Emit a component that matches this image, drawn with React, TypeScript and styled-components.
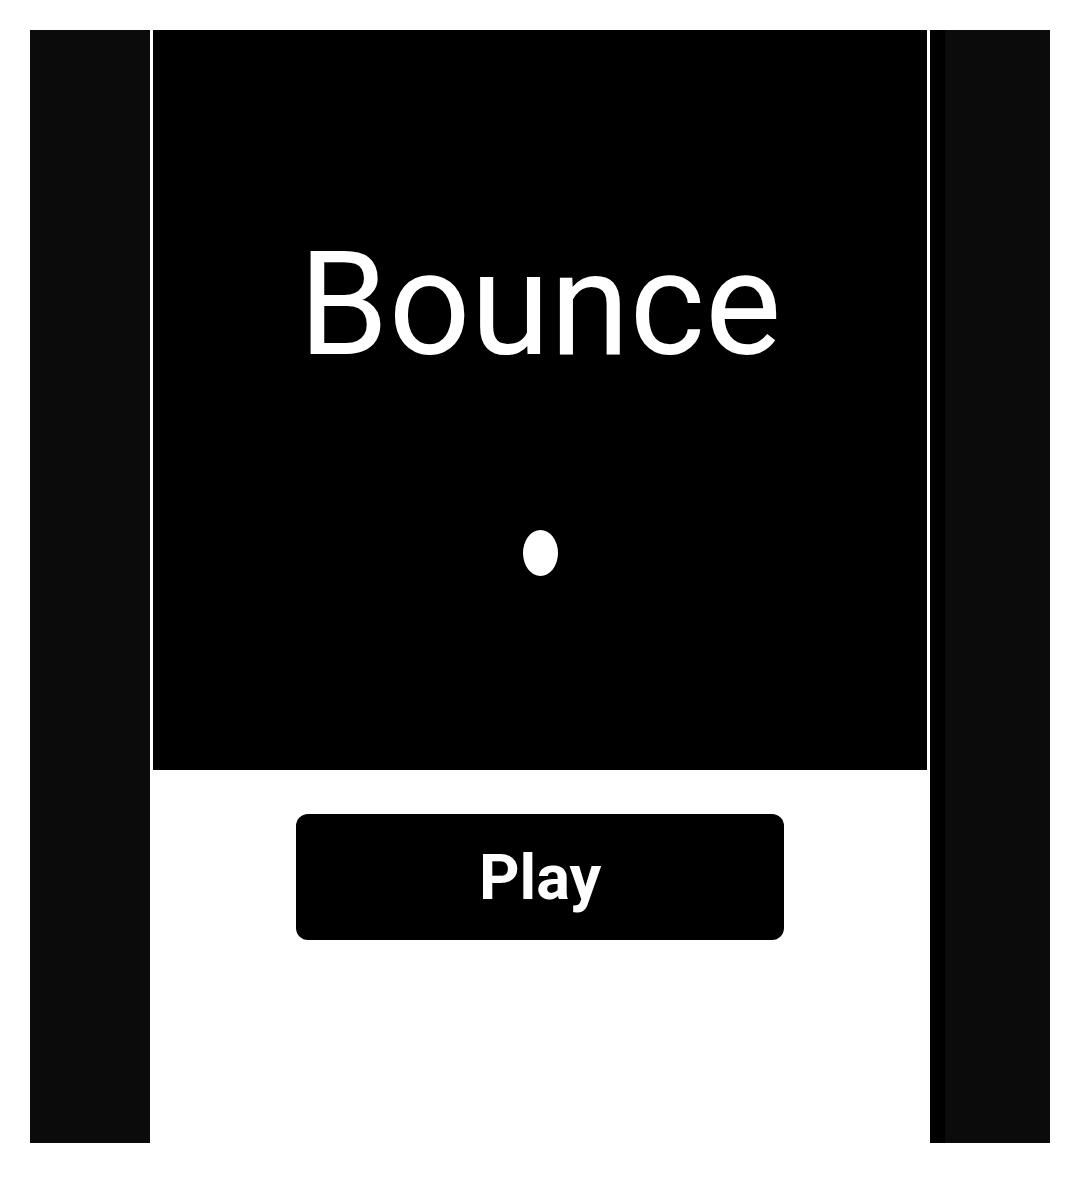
import styled, { createGlobalStyle } from "styled-components";

const GlobalStyle = createGlobalStyle`
  html, body {
    margin: 0;
    padding: 0;
    background: #ffffff;
    font-family: Roboto, sans-serif;
  }
`;

const Page = styled.div`
  display: grid;
  grid-template-columns: 120px 774px 120px;
  column-gap: 3px;
  padding: 30px;
  height: 1113px;
`;

const SidePanel = styled.div<{ $inner?: boolean }>`
  background: #0b0b0b;
  height: 1113px;
  box-shadow: ${({ $inner }) => ($inner ? "inset 15px 0 0 #000" : "none")};
`;

const Center = styled.div`
  display: flex;
  flex-direction: column;
  align-items: center;
`;

const Stage = styled.div`
  width: 100%;
  height: 740px;
  background: #000;
  display: flex;
  flex-direction: column;
  align-items: center;
  padding-top: 190px;
  box-sizing: border-box;
`;

const Title = styled.h1`
  margin: 0;
  font-family: Roboto, sans-serif;
  font-weight: 400;
  font-size: 144px;
  line-height: 170px;
  color: #fff;
`;

const Ball = styled.div`
  margin-top: 140px;
  width: 35px;
  height: 46px;
  border-radius: 50%;
  background: #fff;
`;

const PlayButton = styled.button`
  margin-top: 44px;
  width: 488px;
  height: 126px;
  border: none;
  border-radius: 12px;
  background: #000;
  color: #fff;
  font-family: Roboto, sans-serif;
  font-weight: 700;
  font-size: 63px;
  cursor: pointer;
`;

const App = () => {
  return (
    <>
      <GlobalStyle />
      <Page>
        <SidePanel />
        <Center>
          <Stage>
            <Title>Bounce</Title>
            <Ball />
          </Stage>
          <PlayButton>Play</PlayButton>
        </Center>
        <SidePanel $inner />
      </Page>
    </>
  );
};

export default App;
